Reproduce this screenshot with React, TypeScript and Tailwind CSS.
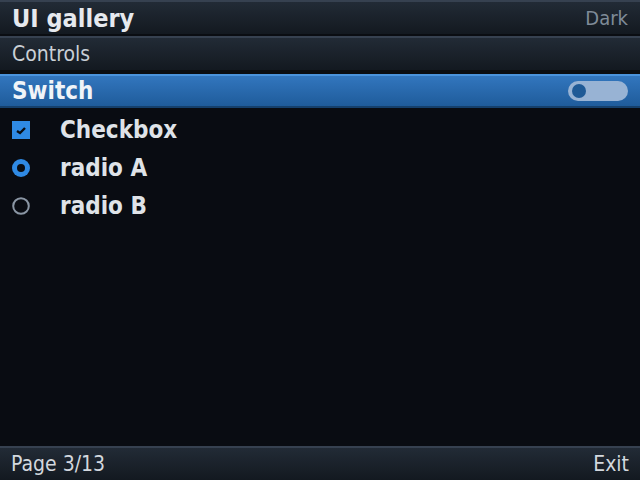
import React from 'react'

const font = { fontFamily: '"DejaVu Sans Condensed", "DejaVu Sans", sans-serif', fontStretch: 'condensed' as const }

function Bar({ children, className }: { children: React.ReactNode; className?: string }) {
    return (
        <div className={'flex items-center justify-between border-t-2 border-[#364150] bg-gradient-to-b from-[#222b36] to-[#131920] ' + (className ?? '')}>
            {children}
        </div>
    )
}

function CheckIcon() {
    return (
        <svg width="18" height="18" viewBox="0 0 18 18">
            <rect x="0" y="0" width="18" height="18" fill="#2f8ae4" />
            <path d="M5 10 L8 12 L13 7" stroke="#0a0d12" strokeWidth="2.4" fill="none" />
        </svg>
    )
}

function RadioIcon({ on }: { on: boolean }) {
    return on ? (
        <svg width="18" height="18" viewBox="0 0 18 18">
            <circle cx="9" cy="9" r="9" fill="#2f8ae4" />
            <circle cx="9" cy="9" r="4" fill="#0a0d12" />
        </svg>
    ) : (
        <svg width="18" height="18" viewBox="0 0 18 18">
            <circle cx="9" cy="9" r="7.8" fill="none" stroke="#8a96a4" strokeWidth="2" />
        </svg>
    )
}

export default function App() {
    const rows = [
        { label: 'Checkbox', icon: <CheckIcon /> },
        { label: 'radio A', icon: <RadioIcon on /> },
        { label: 'radio B', icon: <RadioIcon on={false} /> },
    ]

    return (
        <div className="w-[640px] h-[480px] bg-[#090c12] flex flex-col overflow-hidden" style={font}>
            <Bar className="h-[34px] px-3">
                <span className="text-[25px] font-bold text-[#e6e9ee] leading-none">UI gallery</span>
                <span className="text-[20px] text-[#7f8b98] leading-none">Dark</span>
            </Bar>
            <div className="h-[2px] bg-[#0a0d12]" />
            <Bar className="h-[34px] px-3">
                <span className="text-[21px] text-[#c9cfd6] leading-none">Controls</span>
            </Bar>
            <div className="h-[4px] bg-[#0a0d12]" />
            <div className="h-[34px] px-3 flex items-center justify-between border-t-2 border-[#4a93dc] border-b-2 border-b-[#15406c] bg-gradient-to-b from-[#3276be] to-[#1f5c9b]">
                <span className="text-[24px] font-bold text-[#f0f4f8] leading-none">Switch</span>
                <div className="w-[60px] h-[20px] rounded-full bg-[#98b3d4] flex items-center px-[4px]">
                    <div className="w-[14px] h-[14px] rounded-full bg-[#1f5a96]" />
                </div>
            </div>
            <div className="flex flex-col pt-[3px]">
                {rows.map((r) => (
                    <div key={r.label} className="h-[38px] flex items-center">
                        <div className="w-[60px] pl-3 flex items-center">{r.icon}</div>
                        <span className="text-[24px] font-bold text-[#dfe3e8] leading-none">{r.label}</span>
                    </div>
                ))}
            </div>
            <div className="flex-1" />
            <Bar className="h-[34px] pl-[11px] pr-[11px]">
                <span className="text-[21px] text-[#d3d8de] leading-none">Page 3/13</span>
                <span className="text-[21px] text-[#d3d8de] leading-none">Exit</span>
            </Bar>
        </div>
    )
}
